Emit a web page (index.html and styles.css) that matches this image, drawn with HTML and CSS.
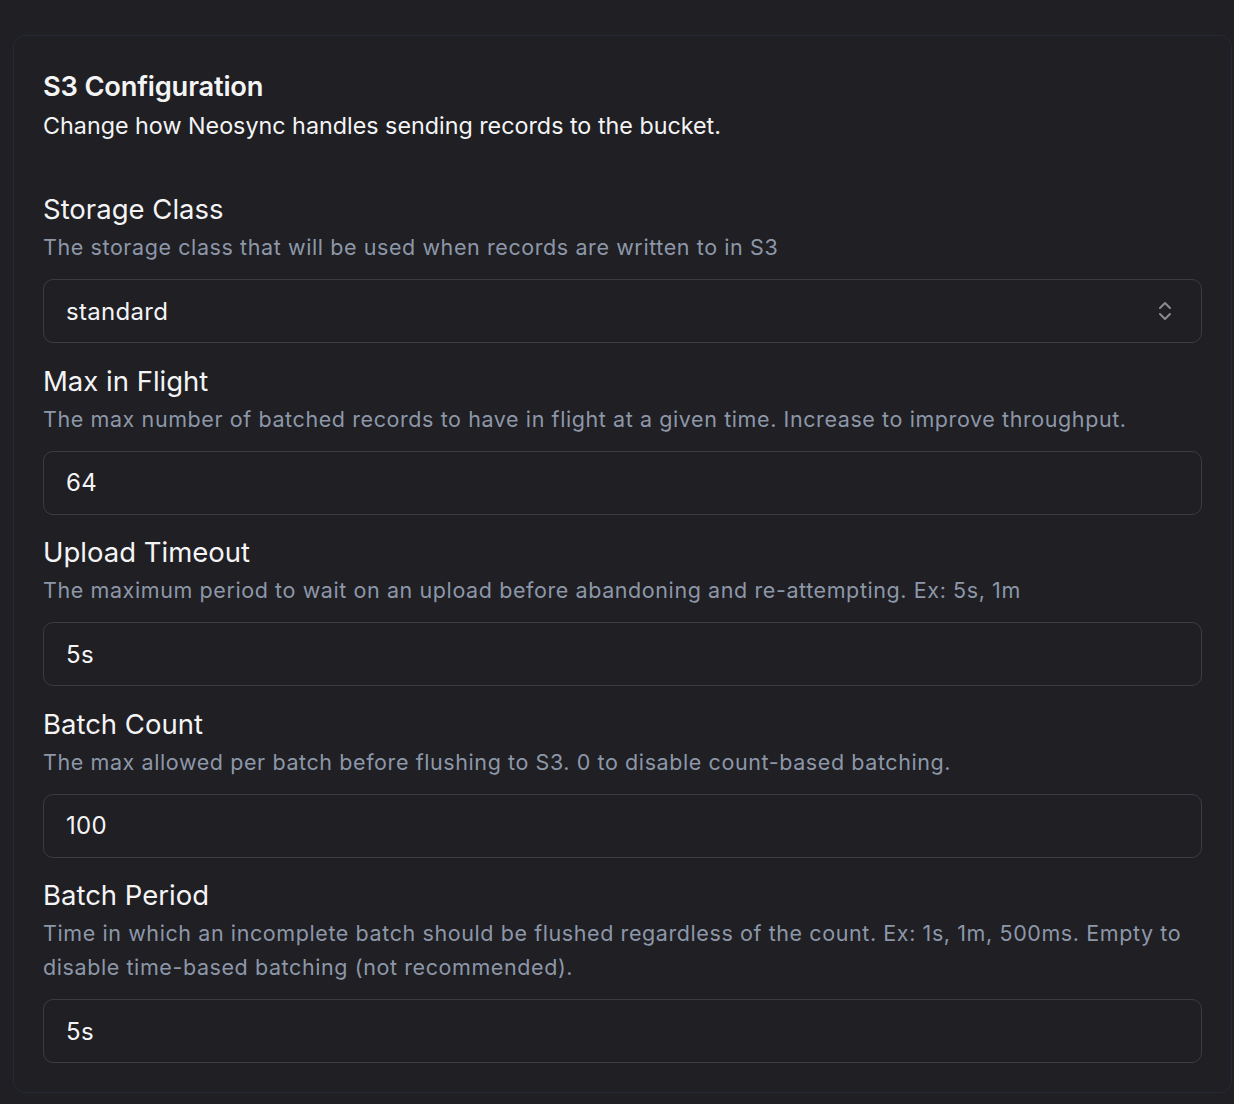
FILE: index.html
```html
<!DOCTYPE html>
<html lang="en">
<head>
<meta charset="utf-8">
<title>S3 Configuration</title>
<link rel="stylesheet" href="styles.css">
</head>
<body>
<div class="page">
  <section class="card">
    <header class="card-header">
      <h2 class="card-title">S3 Configuration</h2>
      <p class="card-desc">Change how Neosync handles sending records to the bucket.</p>
    </header>
    <div class="fields">
      <div class="field">
        <label class="label">Storage Class</label>
        <p class="desc">The storage class that will be used when records are written to in S3</p>
        <div class="input select">
          <span>standard</span>
          <svg class="chev" width="24" height="24" viewBox="0 0 24 24" fill="none" stroke="currentColor" stroke-width="2" stroke-linecap="round" stroke-linejoin="round"><path d="m7 15 5 5 5-5"/><path d="m7 9 5-5 5 5"/></svg>
        </div>
      </div>
      <div class="field">
        <label class="label">Max in Flight</label>
        <p class="desc">The max number of batched records to have in flight at a given time. Increase to improve throughput.</p>
        <div class="input">64</div>
      </div>
      <div class="field">
        <label class="label">Upload Timeout</label>
        <p class="desc">The maximum period to wait on an upload before abandoning and re-attempting. Ex: 5s, 1m</p>
        <div class="input">5s</div>
      </div>
      <div class="field">
        <label class="label">Batch Count</label>
        <p class="desc">The max allowed per batch before flushing to S3. 0 to disable count-based batching.</p>
        <div class="input">100</div>
      </div>
      <div class="field">
        <label class="label">Batch Period</label>
        <p class="desc">Time in which an incomplete batch should be flushed regardless of the count. Ex: 1s, 1m, 500ms. Empty to disable time-based batching (not recommended).</p>
        <div class="input">5s</div>
      </div>
    </div>
  </section>
</div>
</body>
</html>
```
FILE: styles.css
```css
* { box-sizing: border-box; }
html, body {
  margin: 0;
  padding: 0;
  background: #1f1f24;
}
body {
  font-family: Inter, "Noto Sans", "Liberation Sans", sans-serif;
  color: #f4f4f5;
}
.page {
  padding: 35px 2px 11px 13px;
}
.card {
  border: 1px solid #242a35;
  border-radius: 12px;
  padding: 29px 29px 29px 29px;
  background: #1f1f24;
}
.card-header {
  margin: 0 0 49px 0;
}
.card-title {
  margin: 0;
  font-size: 27.3px;
  line-height: 44px;
  font-weight: 600;
  letter-spacing: -0.2px;
}
.card-desc {
  margin: 0;
  font-size: 23.3px;
  line-height: 34px;
  color: #f4f4f5;
}
.fields {
  display: flex;
  flex-direction: column;
  gap: 20.5px;
}
.field {
  display: flex;
  flex-direction: column;
}
.label {
  font-size: 27.5px;
  line-height: 34px;
  font-weight: 400;
  margin-bottom: 4px;
}
.desc {
  margin: 0 0 15px 0;
  font-size: 21.5px;
  line-height: 34px;
  color: #8d97a8;
  letter-spacing: 0.59px;
}
.input {
  height: 64px;
  border: 1px solid #3b3b42;
  border-radius: 10px;
  padding: 0 22px;
  display: flex;
  align-items: center;
  font-size: 24px;
  letter-spacing: 0.3px;
  color: #f4f4f5;
}
.select {
  justify-content: space-between;
}
.chev {
  color: #8a8a90;
  margin-right: 2px;
}
```
